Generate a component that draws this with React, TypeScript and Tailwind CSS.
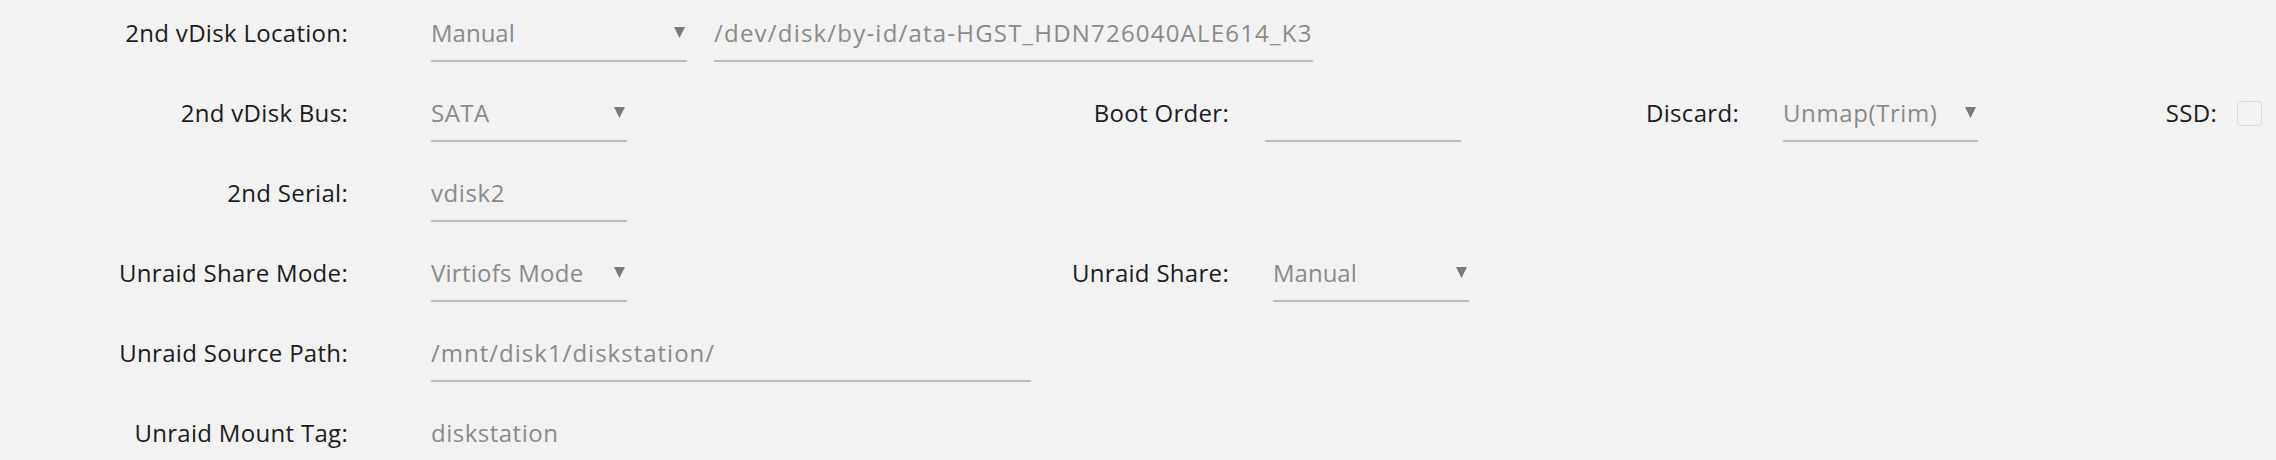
import React from "react";

const Arrow = () => (
  <svg
    className="absolute right-[2px] top-[9px]"
    width="11"
    height="11"
    viewBox="0 0 11 11"
  >
    <polygon points="0,0 11,0 5.5,11" fill="#7a7a7a" />
  </svg>
);

const Label = ({ w, children }: { w: string; children: React.ReactNode }) => (
  <div className={`${w} shrink-0 whitespace-nowrap text-right leading-[30px] tracking-[0.3px] text-[#1c1c1c]`}>
    {children}
  </div>
);

const Field = ({
  cls,
  children,
  arrow,
}: {
  cls: string;
  children?: React.ReactNode;
  arrow?: boolean;
}) => (
  <div
    className={`${cls} relative h-[44px] shrink-0 overflow-hidden whitespace-nowrap border-b-2 border-[#bdbdbd] pb-[12px] leading-[30px] text-[#8a8a8a]`}
  >
    {children}
    {arrow && <Arrow />}
  </div>
);

const Row = ({ children }: { children: React.ReactNode }) => (
  <div className="flex h-[80px] items-start pt-[18px]">{children}</div>
);

export default function App() {
  return (
    <div
      className="h-[460px] w-[2276px] overflow-hidden bg-[#f2f2f2] text-[24px]"
      style={{ fontFamily: '"Open Sans", "Noto Sans", sans-serif' }}
    >
      <Row>
        <Label w="w-[348px]">2nd vDisk Location:</Label>
        <Field cls="ml-[83px] w-[256px]" arrow>
          Manual
        </Field>
        <Field cls="ml-[27px] w-[599px] tracking-[1.2px]">
          /dev/disk/by-id/ata-HGST_HDN726040ALE614_K3GHE3BL
        </Field>
      </Row>
      <Row>
        <Label w="w-[348px]">2nd vDisk Bus:</Label>
        <Field cls="ml-[83px] w-[196px] tracking-[0.5px]" arrow>
          SATA
        </Field>
        <Label w="w-[602px]">Boot Order:</Label>
        <Field cls="ml-[36px] w-[196px]"></Field>
        <Label w="w-[278px]">Discard:</Label>
        <Field cls="ml-[44px] w-[195px] tracking-[0.6px]" arrow>
          Unmap(Trim)
        </Field>
        <Label w="w-[239px]">SSD:</Label>
        <div className="ml-[20px] mt-[3px] h-[25px] w-[25px] shrink-0 rounded-[4px] border-[1.5px] border-[#dadada] bg-[#f2f2f2]" />
      </Row>
      <Row>
        <Label w="w-[348px]">2nd Serial:</Label>
        <Field cls="ml-[83px] w-[196px] tracking-[0.6px]">vdisk2</Field>
      </Row>
      <Row>
        <Label w="w-[348px]">Unraid Share Mode:</Label>
        <Field cls="ml-[83px] w-[196px] tracking-[0.25px]" arrow>
          Virtiofs Mode
        </Field>
        <Label w="w-[602px]">Unraid Share:</Label>
        <Field cls="ml-[44px] w-[196px]" arrow>
          Manual
        </Field>
      </Row>
      <Row>
        <Label w="w-[348px]">Unraid Source Path:</Label>
        <Field cls="ml-[83px] w-[600px] tracking-[1px]">/mnt/disk1/diskstation/</Field>
      </Row>
      <Row>
        <Label w="w-[348px]">Unraid Mount Tag:</Label>
        <Field cls="ml-[83px] w-[196px] tracking-[0.5px]">diskstation</Field>
      </Row>
    </div>
  );
}
